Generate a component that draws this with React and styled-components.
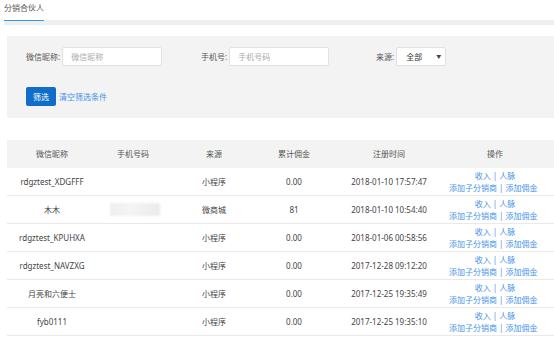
import styled, { createGlobalStyle } from "styled-components";

const GlobalStyle = createGlobalStyle`
  body {
    margin: 0;
    background: #fff;
    font-family: "Noto Sans", "Noto Sans CJK SC", sans-serif;
    font-size: 8px;
    color: #333;
  }
`;

const TabBar = styled.div`
  display: flex;
  margin-left: 4px;
  border-bottom: 5px solid #efefef;
`;

const Tab = styled.div`
  position: relative;
  height: 20px;
  padding-top: 3px;
  box-sizing: border-box;
  line-height: 10px;
  color: #555;
  &::after {
    content: "";
    position: absolute;
    left: 0;
    right: 0;
    bottom: -1px;
    height: 1px;
    background: #2d9cf2;
  }
`;

const Content = styled.div`
  padding: 11px 0 0 7px;
`;

const FilterPanel = styled.div`
  background: #f3f3f3;
  padding: 11px 0 12px 19px;
  display: flex;
  flex-direction: column;
  gap: 21px;
`;

const FieldRow = styled.div`
  display: grid;
  grid-template-columns: repeat(3, 175px);
`;

const Field = styled.label`
  display: flex;
  align-items: center;
  gap: 2px;
  color: #555;
`;

const Input = styled.input`
  width: ${(p) => p.w}px;
  height: 19px;
  box-sizing: border-box;
  border: 1px solid #e2e2e2;
  border-radius: 2px;
  background: #fff;
  padding: 0 8px;
  font: inherit;
  font-size: 8px;
  outline: none;
  &::placeholder {
    color: #aaa;
  }
`;

const Select = styled.div`
  width: 50px;
  height: 19px;
  box-sizing: border-box;
  border: 1px solid #e2e2e2;
  border-radius: 2px;
  background: #fff;
  display: flex;
  align-items: center;
  justify-content: space-between;
  padding: 0 4px 0 9px;
  color: #333;
  span {
    font-size: 5px;
    color: #444;
    margin-top: -2px;
  }
`;

const ButtonRow = styled.div`
  display: flex;
  align-items: center;
  gap: 3px;
`;

const Button = styled.button`
  width: 30px;
  height: 19px;
  border: none;
  border-radius: 2px;
  background: #106ec9;
  color: #fff;
  font: inherit;
  font-size: 8px;
  padding: 0;
`;

const Link = styled.a`
  color: #4592e8;
  text-decoration: none;
`;

const Table = styled.div`
  margin-top: 22px;
`;

const Row = styled.div`
  display: grid;
  grid-template-columns: 90px 72px 90px 70px 120px 92px;
  height: 28px;
  align-items: center;
  background: ${(p) => (p.head ? "#f3f3f3" : "#fff")};
  border-bottom: ${(p) => (p.head ? "none" : "1px solid #e9e9e9")};
  box-sizing: border-box;
  color: ${(p) => (p.head ? "#555" : "#444")};
`;

const Cell = styled.div`
  text-align: center;
  white-space: nowrap;
  line-height: 12px;
`;

const Blurred = styled.span`
  display: inline-block;
  width: 50px;
  height: 13px;
  margin-left: 4px;
  background: linear-gradient(90deg, #efefef, #f4f4f4 40%, #ebebeb);
  filter: blur(1px);
  vertical-align: middle;
`;

const OpLine = styled.div`
  padding-right: ${(p) => (p.shift ? 15 : 0)}px;
  color: #4592e8;
`;

const rows = [
  ["rdgztest_XDGFFF", false, "小程序", "0.00", "2018-01-10 17:57:47"],
  ["木木", true, "微商城", "81", "2018-01-10 10:54:40"],
  ["rdgztest_KPUHXA", false, "小程序", "0.00", "2018-01-06 00:58:56"],
  ["rdgztest_NAVZXG", false, "小程序", "0.00", "2017-12-28 09:12:20"],
  ["月亮和六便士", false, "小程序", "0.00", "2017-12-25 19:35:49"],
  ["fyb0111", false, "小程序", "0.00", "2017-12-25 19:35:10"],
];

export default function App() {
  return (
    <>
      <GlobalStyle />
      <TabBar>
        <Tab>分销合伙人</Tab>
      </TabBar>
      <Content>
        <FilterPanel>
          <FieldRow>
            <Field>
              微信昵称:
              <Input w={100} placeholder="微信昵称" />
            </Field>
            <Field>
              手机号:
              <Input w={100} placeholder="手机号码" />
            </Field>
            <Field>
              来源:
              <Select>
                全部<span>▼</span>
              </Select>
            </Field>
          </FieldRow>
          <ButtonRow>
            <Button>筛选</Button>
            <Link href="#">清空筛选条件</Link>
          </ButtonRow>
        </FilterPanel>
        <Table>
          <Row head>
            <Cell>微信昵称</Cell>
            <Cell>手机号码</Cell>
            <Cell>来源</Cell>
            <Cell>累计佣金</Cell>
            <Cell>注册时间</Cell>
            <Cell>操作</Cell>
          </Row>
          {rows.map(([name, phone, src, amount, time]) => (
            <Row key={time}>
              <Cell>{name}</Cell>
              <Cell>{phone && <Blurred />}</Cell>
              <Cell>{src}</Cell>
              <Cell>{amount}</Cell>
              <Cell>{time}</Cell>
              <Cell>
                <OpLine>收入 | 人脉</OpLine>
                <OpLine shift>添加子分销商 | 添加佣金</OpLine>
              </Cell>
            </Row>
          ))}
        </Table>
      </Content>
    </>
  );
}
